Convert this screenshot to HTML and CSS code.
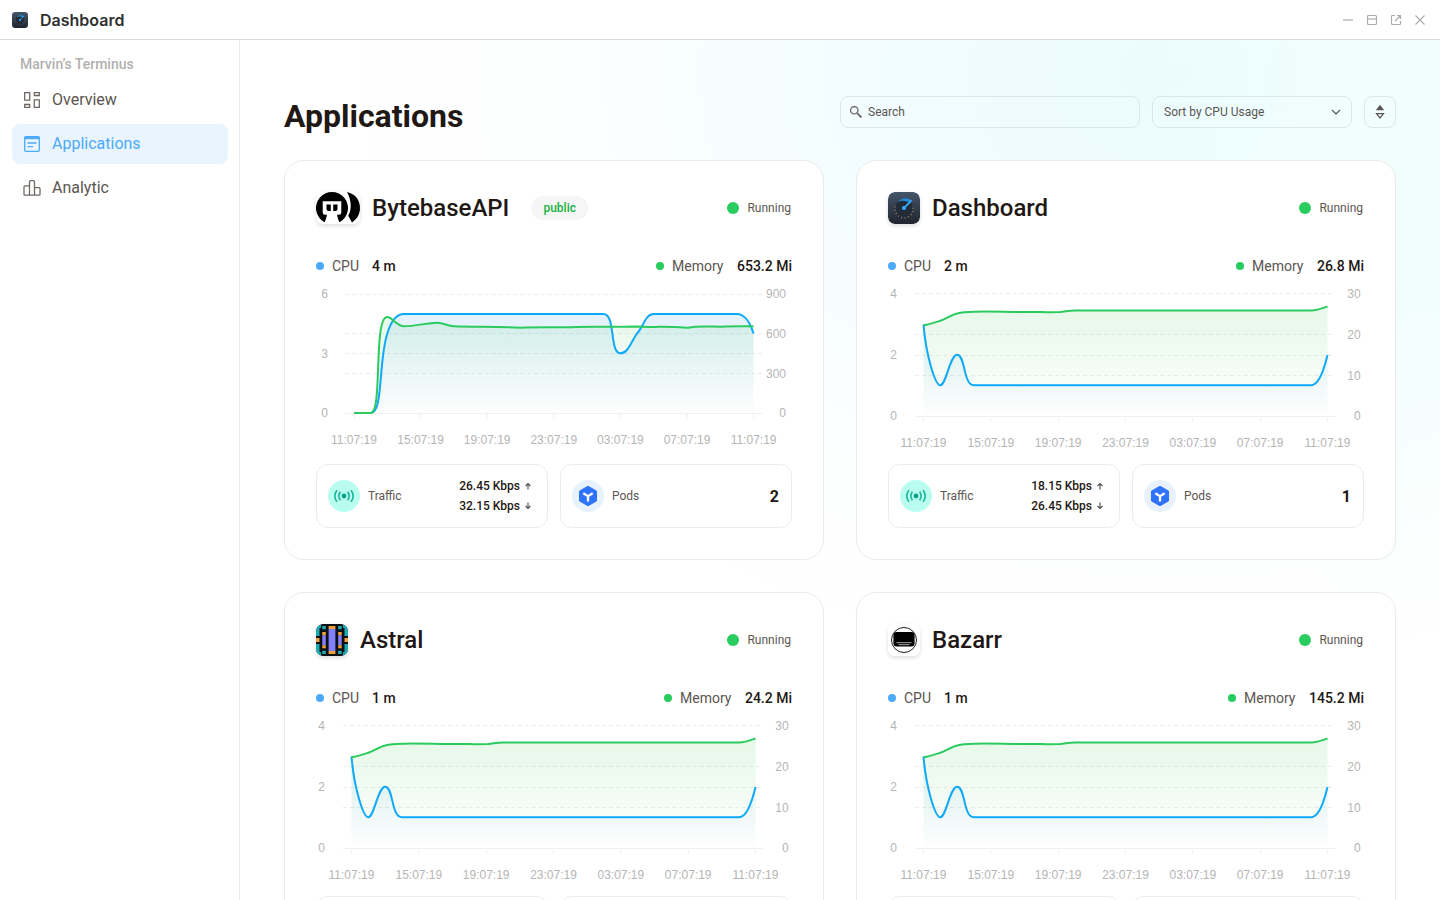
FILE: index.html
```html
<!DOCTYPE html>
<html lang="en">
<head>
<meta charset="utf-8">
<title>Dashboard</title>
<link rel="stylesheet" href="styles.css">
</head>
<body>
<svg class="defs" width="0" height="0" aria-hidden="true">
  <defs>
    <linearGradient id="fill-blue" gradientUnits="userSpaceOnUse" x1="0" y1="17" x2="0" y2="140"><stop offset="0" stop-color="#3d9df0" stop-opacity=".17"/><stop offset="1" stop-color="#3d9df0" stop-opacity="0"/></linearGradient>
    <linearGradient id="fill-green" gradientUnits="userSpaceOnUse" x1="0" y1="17" x2="0" y2="140"><stop offset="0" stop-color="#35c84a" stop-opacity=".14"/><stop offset="1" stop-color="#35c84a" stop-opacity="0"/></linearGradient>
    <linearGradient id="slate" x1="0" y1="0" x2="0" y2="1"><stop offset="0" stop-color="#45566a"/><stop offset="1" stop-color="#20252f"/></linearGradient>
  </defs>
  <symbol id="logo-dashboard" viewBox="0 0 32 32">
    <rect width="32" height="32" rx="6.5" fill="url(#slate)"/>
    <circle cx="16" cy="16.5" r="9.8" fill="#222c38"/>
    <path d="M9 21.500a9 9 0 1 1 14 0" fill="none" stroke="#39434d" stroke-width="1"/>
    <path d="M6.900 14.500a9.300 9.300 0 1 0 18.200 0" fill="none" stroke="#a88a5c" stroke-width="1.400" stroke-dasharray=".9 2.500"/>
    <path d="M9.500 10.200Q15 3.500 24 8L21.500 11Q15.500 7 9.500 10.200z" fill="#2388d2"/>
    <path d="M16 16.200l7.500-7.700" stroke="#36b3ff" stroke-width="1.700"/>
    <circle cx="16" cy="16" r="2.100" fill="#36aaff"/>
  </symbol>
  <symbol id="logo-bytebase" viewBox="0 0 44 32">
    <rect width="44" height="32" rx="7" fill="#fff"/>
    <path d="M8 29.900A16 16 0 1 1 24 29.900z"/>
    <path d="M6.700 9.200H25.300V20.500Q25.300 22.800 23 22.800H21Q21.500 27 24.200 32H7.800Q10.500 27 11 22.800H9Q6.700 22.800 6.700 20.500z" fill="#fff"/>
    <path d="M10.500 12.500h4.300v6.500h-2.300q-2 0-2-2zM17.200 12.500h4.300V17q0 2-2 2h-2.300z"/>
    <path d="M31 0C39.500 2 44 8 44 16c0 6-2.700 11-8 14.500l-3.800-6.800C36 18 35.500 8 31 0z"/>
  </symbol>
  <symbol id="logo-astral" viewBox="0 0 32 32">
    <rect width="32" height="32" rx="6.500" fill="#0b1017"/>
    <path d="M0 6.500A6.500 6.500 0 0 1 5 .2V4H3.500v8H0zM32 6.500A6.500 6.500 0 0 0 27 .2V4h1.500v8H32zM0 25.500A6.500 6.500 0 0 0 5 31.800V28H3.500v-8H0zM32 25.500a6.500 6.500 0 0 1-5 6.300V28h1.500v-8H32zM6.300 2h3.500v3.300H6.300zM22.200 2h3.500v3.300h-3.500zM6.300 26.700h3.500V30H6.300zM22.200 26.700h3.500V30h-3.500z" fill="#1babb0"/>
    <path d="M12.600 5h6.800v22h-6.800zM6.300 11.300h3.500v10H6.300zM22.200 11.300h3.500v10h-3.500z" fill="#8280fb"/>
    <path d="M12.600 2h6.800v3h-6.800zM12.600 27h6.800v3h-6.800zM6.300 8h3.500v3.300H6.300zM6.300 21.300h3.500v3H6.300zM22.200 8h3.500v3.300h-3.500zM22.200 21.300h3.500v3h-3.500zM0 14h3.500v4H0zM28.500 14H32v4h-3.500z" fill="#efa13b"/>
  </symbol>
  <symbol id="logo-bazarr" viewBox="0 0 32 32">
    <rect width="32" height="32" rx="7" fill="#fff"/>
    <circle cx="16" cy="16" r="12.500" fill="#fff" stroke="#222" stroke-width="1"/>
    <rect x="5.400" y="8" width="21.200" height="14.500" rx="3.300"/>
    <path d="M8.500 18.700h15M10.500 20.700h11" stroke="#a8a8a8" stroke-width="1"/>
  </symbol>
  <symbol id="icon-traffic" viewBox="0 0 32 32">
    <circle cx="16" cy="16" r="16" fill="#b9fdf0"/>
    <circle cx="16" cy="16" r="2.400" fill="#0aa588"/>
    <path d="M12.400 11.700q-3 4.300 0 8.600M19.600 11.700q3 4.300 0 8.600M8.900 10.200q-4.200 5.800 0 11.600M23.100 10.200q4.200 5.800 0 11.600" fill="none" stroke="#12b594" stroke-width="1.500"/>
  </symbol>
  <symbol id="icon-pods" viewBox="0 0 32 32">
    <circle cx="16" cy="16" r="16" fill="#e7f2fd"/>
    <path d="M16 6.200l8.500 4.900v9.800L16 25.800l-8.500-4.900v-9.800z" fill="#2f73f8" stroke="#2f73f8" stroke-linejoin="round"/>
    <path d="M11.300 13.300L16 16.200l4.700-2.900M16 16v5.500" fill="none" stroke="#fff" stroke-width="2.300"/>
  </symbol>
</svg>

<header class="titlebar">
  <svg class="titlebar-logo" width="16" height="16"><use href="#logo-dashboard"/></svg>
  <h1 class="titlebar-name">Dashboard</h1>
  <div class="window-controls">
    <svg width="12" height="12"><path d="M1 6h10"/></svg>
    <svg width="12" height="12"><rect x="1.500" y="1.500" width="9" height="9" rx="1"/><path d="M1.500 5h9"/></svg>
    <svg width="12" height="12"><path d="M5 1.500H2.300q-.8 0-.8.8v7.400q0 .8.800.8h7.400q.8 0 .8-.8V7M7 1.500h3.500V5M10.500 1.500L5 7"/></svg>
    <svg width="12" height="12"><path d="M1.500 1.500l9 9M10.500 1.500l-9 9"/></svg>
  </div>
</header>

<div class="layout">
  <aside class="sidebar">
    <div class="sidebar-title">Marvin’s Terminus</div>
    <nav class="menu">
      <a class="menu-item"><svg width="20" height="20"><path d="M2.700 2.700h5v7.500h-5zM12.300 2.700h5v2.800h-5zM12.300 9.800h5v7.500h-5zM2.700 14.500h5v2.800h-5z"/></svg><span>Overview</span></a>
      <a class="menu-item active"><svg width="20" height="20"><rect x="2.700" y="2.700" width="14.600" height="14.600" rx="1"/><path d="M2.500 4h15" stroke-width="2.400"/><path d="M5.500 9h9M5.500 12.700h5.500"/></svg><span>Applications</span></a>
      <a class="menu-item"><svg width="20" height="20"><path d="M7.500 17.200V3.700q0-1 1-1h3q1 0 1 1v13.500M7.500 7.900H3q-1 0-1 1v7.300q0 1 1 1h14q1 0 1-1v-5.500q0-1-1-1h-4.500"/></svg><span>Analytic</span></a>
    </nav>
  </aside>

  <main class="content">
    <div class="page-head">
      <h2 class="page-title">Applications</h2>
      <div class="filters">
        <div class="field search"><svg width="16" height="16"><circle cx="6.300" cy="6.300" r="3.700"/><path d="M9.200 9.200l4.200 4.200" stroke-width="1.600"/></svg>Search</div>
        <div class="field select">Sort by CPU Usage<svg width="12" height="12"><path d="M2 4l4 4 4-4"/></svg></div>
        <div class="field order"><svg width="12" height="16"><path class="solid" d="M6 .8L10.200 6.300H1.800z"/><path d="M2.500 9.700h7L6 14z"/></svg></div>
      </div>
    </div>
    <div class="cards" id="cards"></div>
  </main>
</div>
<script src="app.js"></script>
</body>
</html>
```
FILE: styles.css
```css
* { box-sizing: border-box; }
body { margin: 0; height: 900px; overflow: hidden; font-family: Roboto, sans-serif; color: #1f1814; background: #fff; }
h1, h2, h3 { margin: 0; }
svg { flex: none; }
.defs { position: absolute; }

.titlebar { height: 40px; display: flex; align-items: center; padding: 0 14px 0 12px; border-bottom: 1px solid #dadada; }
.titlebar-name { margin-left: 12px; font: 600 16px/20px Inter, sans-serif; color: #303030; }
.window-controls { margin-left: auto; display: flex; gap: 12px; }
.window-controls svg { fill: none; stroke: #adadad; stroke-width: 1.2; }

.layout { display: flex; height: 860px; }
.sidebar { width: 240px; flex: none; padding: 14px 11px 0 12px; border-right: 1px solid #ebebeb; }
.sidebar-title { padding-left: 8px; font-size: 14px; font-weight: 500; line-height: 20px; color: #b2b0af; }
.menu { display: flex; flex-direction: column; gap: 4px; margin-top: 6px; }
.menu-item { height: 40px; display: flex; align-items: center; gap: 10px; padding-left: 10px; border-radius: 8px; font-size: 16px; color: #5c5551; }
.menu-item span { padding-bottom: 2px; }
.menu-item svg { fill: none; stroke: #6f6864; stroke-width: 1.3; }
.menu-item.active { background: #e9f4ff; color: #4cabfa; }
.menu-item.active svg { stroke: #4cabfa; }

.content { flex: 1; min-width: 0; overflow: hidden; padding: 56px 44px 0;
  background:
    radial-gradient(ellipse 300px 520px at 100% 8%, #f0fffb 0, rgba(240,255,251,0) 100%),
    radial-gradient(ellipse 860px 620px at 78% 4%, #ebfcfe 0, rgba(240,252,255,.8) 40%, rgba(250,253,255,.4) 72%, rgba(255,255,255,0) 100%),
    #fff; }
.page-head { height: 64px; display: flex; justify-content: space-between; align-items: flex-start; }
.page-title { font-size: 32px; font-weight: 700; line-height: 40px; }
.filters { display: flex; gap: 12px; }
.field { height: 32px; display: flex; align-items: center; border: 1px solid #d9e8ea; border-radius: 8px; font-size: 12px; color: #5c5551; }
.field svg { fill: none; stroke: #5c5551; stroke-width: 1.2; }
.search { width: 300px; padding-left: 7px; gap: 4px; }
.select { width: 200px; padding: 0 9px 0 11px; justify-content: space-between; }
.order { width: 32px; justify-content: center; }
.field .solid { fill: #5c5551; stroke: none; }

.cards { display: grid; grid-template-columns: 540px 540px; gap: 32px; }
.card { height: 400px; padding: 31px; background: #fff; border: 1px solid #ebebeb; border-radius: 20px; }
.card-head { display: flex; align-items: center; height: 32px; }
.logo { display: block; border-radius: 7px; box-shadow: 0 2px 4px rgba(0,0,0,.13); }
.card-name { margin-left: 12px; font-size: 24px; font-weight: 500; line-height: 32px; }
.badge { margin-left: 22px; height: 24px; padding: 0 12px; border-radius: 12px; background: #f6f6f6; color: #17b341; font-size: 12px; font-weight: 500; line-height: 24px; }
.status { margin-left: auto; display: flex; align-items: center; gap: 8px; padding-right: 1px; font-size: 12px; color: #5c5551; }
.status::before { content: ""; width: 12px; height: 12px; border-radius: 50%; background: #29cc5f; }

.legend { display: flex; justify-content: space-between; margin-top: 32px; height: 20px; font-size: 14px; line-height: 20px; color: #5c5551; }
.legend-item { display: flex; align-items: center; gap: 8px; }
.legend-item::before { content: ""; width: 8px; height: 8px; border-radius: 50%; background: #4da9fa; }
.legend-item.memory::before { background: #29cc5f; }
.legend-item b { margin-left: 5px; font-weight: 500; color: #1f1814; }
.legend-item.memory b { margin-left: 5.5px; }

.chart { display: block; font: 12px "Liberation Sans", Arial, sans-serif; fill: #b5b5b5; }
.grid-line { stroke: #ebeded; stroke-dasharray: 4 3; }
.axis { stroke: #f0f0f0; fill: none; }
.line { fill: none; stroke-width: 2; stroke-linecap: butt; }
.line.cpu { stroke: #0ea9f9; }
.line.mem { stroke: #2bcb5e; }

.stats { display: grid; grid-template-columns: 1fr 1fr; gap: 12px; }
.stat { height: 64px; display: flex; align-items: center; padding: 0 15px 0 11px; border: 1px solid #ebebeb; border-radius: 12px; font-size: 12px; color: #5c5551; }
.stat-label { margin-left: 8px; }
.rates { margin-left: auto; font-weight: 500; line-height: 20px; color: #1f1814; }
.rate { display: flex; align-items: center; justify-content: flex-end; gap: 4px; }
.rate svg { fill: none; stroke: #5c5551; stroke-width: 1.2; }
.count { margin-left: auto; font-size: 16px; font-weight: 700; color: #1f1814; }
.stat:last-child { padding-right: 12px; }
```
FILE: app.js
```js
const times = ['11:07:19', '15:07:19', '19:07:19', '23:07:19', '03:07:19', '07:07:19', '11:07:19'];

const burst = {
  left: [['6', 18], ['3', 77.5], ['0', 137]],
  right: [['900', 18], ['600', 57.5], ['300', 97.5], ['0', 137]],
  grid: [18.5, 57.5, 77.5, 97.5],
  start: 38, step: 66.6, base: 137.5, from: 29, to: 447, labelY: 167.5, leftX: 12, rightX: 470,
  cpu: 'M38 137H54.600C67.500 137 62 87 71.300 57.500C75 45 80 38 88 38H287.500C300 38 293 77.300 304.600 77.300C312 77.300 315 66 321 57.500C328 50 329 38 338 38H421C428 38 434 46 437.500 57.500',
  mem: 'M38 137H54.600C67 137 57 41 71.300 41C76 41 81 50.300 88 50.300C99 50.300 112 46.700 121 46.700C128 46.700 131 50 138 50.300C160 51.200 184 50.200 205 51.800C225 50.800 240 51.900 260 50.900C285 50.300 295 51.300 320 50.500C335 51.700 345 49.800 372 51.800C382 49.600 390 50.500 405 50.700C418 50.100 425 50.400 437.500 50.300'
};
const steady = {
  left: [['4', 17.5], ['2', 79], ['0', 140]],
  right: [['30', 17.5], ['20', 58.500], ['10', 99.500], ['0', 140]],
  grid: [17.5, 58.5, 79.5, 99.5],
  start: 35.5, step: 67.33, base: 140.5, from: 27, to: 447, labelY: 171, leftX: 9, rightX: 472.7,
  cpu: 'M35.500 48.500C38 79 47 109.300 52.300 109.300C58 109.300 62 78.700 69.200 78.700C77.500 78.700 75 109.300 86 109.300H423C430 109.300 435 98 439.500 79',
  mem: 'M35.500 49.300C41 48.500 47 46.500 52.300 44.800C58 43 63 39 69.200 37.500C76 35.500 81 35.700 88 35.700C107 35.300 119 36.200 136 36.100C152 36 160 36.300 172 36C178 35.500 180 34.500 187 34.500H423C429 34.500 434 32.500 439.500 30.500'
};

const apps = [
  { name: 'BytebaseAPI', logo: 'bytebase', w: 44, badge: 'public', cpu: '4 m', mem: '653.2 Mi', up: '26.45', down: '32.15', pods: 2, chart: burst },
  { name: 'Dashboard', logo: 'dashboard', w: 32, cpu: '2 m', mem: '26.8 Mi', up: '18.15', down: '26.45', pods: 1, chart: steady },
  { name: 'Astral', logo: 'astral', w: 32, cpu: '1 m', mem: '24.2 Mi', chart: steady },
  { name: 'Bazarr', logo: 'bazarr', w: 32, cpu: '1 m', mem: '145.2 Mi', chart: steady }
];

function chart(c) {
  const label = x => ([t, y]) => `<text x="${x}" y="${y + 4.3}" text-anchor="end">${t}</text>`;
  const x = i => c.start + i * c.step;
  const area = (d, fill) => `<path d="${d}V${c.base}H${c.start}z" fill="url(#${fill})"/>`;
  return `<svg class="chart" width="476" height="188">
    ${c.grid.map(y => `<path class="grid-line" d="M${c.from} ${y}H${c.to}"/>`).join('')}
    <path class="axis" d="M${c.from} ${c.base}H${c.to}${times.map((t, i) => `M${Math.floor(x(i)) + .5} ${c.base}v5`).join('')}"/>
    ${area(c.cpu, 'fill-blue')}${area(c.mem, 'fill-green')}
    <path class="line cpu" d="${c.cpu}"/><path class="line mem" d="${c.mem}"/>
    ${c.left.map(label(c.leftX)).join('')}${c.right.map(label(c.rightX)).join('')}
    ${times.map((t, i) => `<text x="${x(i)}" y="${c.labelY}" text-anchor="middle">${t}</text>`).join('')}
  </svg>`;
}

const arrow = d => `<svg width="8" height="8"><path d="${d}"/></svg>`;

const traffic = a => `
  <svg width="32" height="32"><use href="#icon-traffic"/></svg><span class="stat-label">Traffic</span>
  <div class="rates">
    <div class="rate">${a.up} Kbps ${arrow('M4 7.500V1.500M1.500 4L4 1.500L6.500 4')}</div>
    <div class="rate">${a.down} Kbps ${arrow('M4 .5V6.500M1.500 4L4 6.500L6.500 4')}</div>
  </div>`;

const pods = a => `
  <svg width="32" height="32"><use href="#icon-pods"/></svg><span class="stat-label">Pods</span>
  <span class="count">${a.pods}</span>`;

document.getElementById('cards').innerHTML = apps.map(a => `
  <section class="card">
    <div class="card-head">
      <svg class="logo" width="${a.w}" height="32"><use href="#logo-${a.logo}"/></svg>
      <h3 class="card-name">${a.name}</h3>
      ${a.badge ? `<span class="badge">${a.badge}</span>` : ''}
      <span class="status">Running</span>
    </div>
    <div class="legend">
      <div class="legend-item">CPU <b>${a.cpu}</b></div>
      <div class="legend-item memory">Memory <b>${a.mem}</b></div>
    </div>
    ${chart(a.chart)}
    <div class="stats">
      <div class="stat">${a.up ? traffic(a) : ''}</div>
      <div class="stat">${a.pods ? pods(a) : ''}</div>
    </div>
  </section>`).join('');
```
